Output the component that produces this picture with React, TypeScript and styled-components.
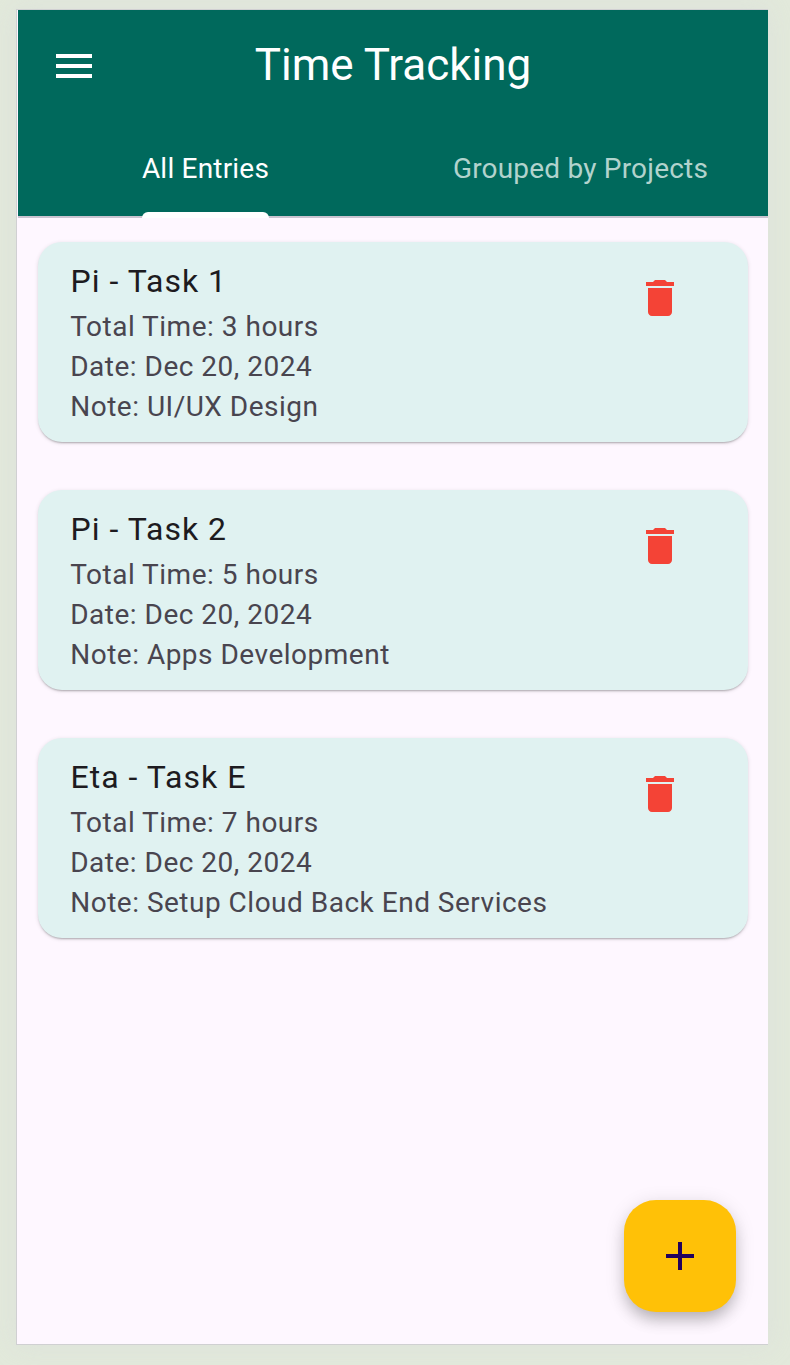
import React from 'react';
import styled, { createGlobalStyle } from 'styled-components';

const Global = createGlobalStyle`
  * { box-sizing: border-box; }
  body { margin: 0; background: #e2e9db; font-family: Roboto, "Liberation Sans", sans-serif; }
`;

const Page = styled.div`
  height: 1365px;
  padding: 9px 22px 20px 16px;
  background: #e2e9db;
  overflow: hidden;
`;

const Screen = styled.main`
  position: relative;
  height: 1336px;
  padding-left: 1px;
  border: 1px solid #d0d0d2;
  border-right: 0;
  background: #fef7ff;
  box-shadow: 0 0 24px rgba(212, 212, 222, .35);
`;

const Header = styled.header`
  height: 208px;
  background: #00695c;
  border-bottom: 2px solid #cac4d0;
  color: #fff;
`;

const AppBar = styled.div`
  display: grid;
  grid-template-columns: 112px 1fr 112px;
  align-items: center;
  height: 112px;
`;

const MenuButton = styled.button`
  display: flex;
  justify-content: center;
  padding: 0;
  border: 0;
  background: none;
  color: inherit;
`;

const Title = styled.h1`
  margin: 0 0 2px;
  text-align: center;
  font-size: 44px;
  font-weight: 400;
  line-height: 56px;
  white-space: nowrap;
`;

const Tabs = styled.nav`
  display: grid;
  grid-template-columns: 1fr 1fr;
  height: 96px;
`;

const Tab = styled.button<{ $active?: boolean }>`
  display: flex;
  justify-content: center;
  padding: 0;
  border: 0;
  background: none;
  font: 400 28px/94px Roboto, "Liberation Sans", sans-serif;
  letter-spacing: .2px;
  color: ${p => (p.$active ? '#fff' : '#b2d3cd')};
`;

const TabLabel = styled.span<{ $active?: boolean }>`
  display: flex;
  flex-direction: column;
  height: 96px;

  &::after {
    content: "";
    flex: none;
    height: 6px;
    margin-top: -4px;
    border-radius: 6px 6px 0 0;
    background: ${p => (p.$active ? '#fff' : 'transparent')};
  }
`;

const Entries = styled.section`
  display: flex;
  flex-direction: column;
  gap: 48px;
  padding: 24px 20px;
`;

const Card = styled.article`
  display: flex;
  justify-content: space-between;
  height: 200px;
  padding: 15px 64px 0 32px;
  border-radius: 24px;
  background: #e0f2f1;
  box-shadow: 0 2px 2px -1px rgba(0,0,0,.25), 0 1px 4px rgba(0,0,0,.12);
`;

const EntryTitle = styled.h2`
  margin: 0 0 2px;
  padding-left: .6px;
  color: #1d1b20;
  font-size: 32px;
  font-weight: 400;
  line-height: 48px;
  letter-spacing: 1px;
`;

const Detail = styled.p`
  margin: 0;
  padding-left: .2px;
  color: #49454f;
  font-size: 28px;
  line-height: 40px;
  letter-spacing: .5px;
`;

const DeleteButton = styled.button`
  align-self: flex-start;
  display: flex;
  margin-top: 17px;
  padding: 0;
  border: 0;
  background: none;
  color: #f44336;
`;

const AddButton = styled.button`
  position: absolute;
  right: 32px;
  bottom: 32px;
  display: flex;
  align-items: center;
  justify-content: center;
  width: 112px;
  height: 112px;
  padding: 0;
  border: 0;
  border-radius: 32px;
  background: #ffc107;
  color: #21005d;
  box-shadow: 0 10px 16px -3px rgba(0,0,0,.22), 0 4px 20px rgba(0,0,0,.13);
`;

const Icon = ({ d }: { d: string }) => (
  <svg width="48" height="48" viewBox="0 0 24 24" fill="currentColor" aria-hidden="true"><path d={d} /></svg>
);

const entries = [
  { title: 'Pi - Task 1', hours: 3, note: 'UI/UX Design' },
  { title: 'Pi - Task 2', hours: 5, note: 'Apps Development' },
  { title: 'Eta - Task E', hours: 7, note: 'Setup Cloud Back End Services' },
];

export default function App() {
  return (
    <Page>
      <Global />
      <Screen>
        <Header>
          <AppBar>
            <MenuButton aria-label="Menu"><Icon d="M3 18h18v-2H3v2zm0-5h18v-2H3v2zm0-7v2h18V6H3z" /></MenuButton>
            <Title>Time Tracking</Title>
          </AppBar>
          <Tabs>
            <Tab $active><TabLabel $active>All Entries</TabLabel></Tab>
            <Tab><TabLabel>Grouped by Projects</TabLabel></Tab>
          </Tabs>
        </Header>
        <Entries>
          {entries.map(e => (
            <Card key={e.title}>
              <div>
                <EntryTitle>{e.title}</EntryTitle>
                <Detail>Total Time: {e.hours} hours</Detail>
                <Detail>Date: Dec 20, 2024</Detail>
                <Detail>Note: {e.note}</Detail>
              </div>
              <DeleteButton aria-label="Delete"><Icon d="M6 19c0 1.1.9 2 2 2h8c1.1 0 2-.9 2-2V7H6v12zM19 4h-3.5l-1-1h-5l-1 1H5v2h14V4z" /></DeleteButton>
            </Card>
          ))}
        </Entries>
        <AddButton aria-label="Add"><Icon d="M19 13h-6v6h-2v-6H5v-2h6V5h2v6h6v2z" /></AddButton>
      </Screen>
    </Page>
  );
}
